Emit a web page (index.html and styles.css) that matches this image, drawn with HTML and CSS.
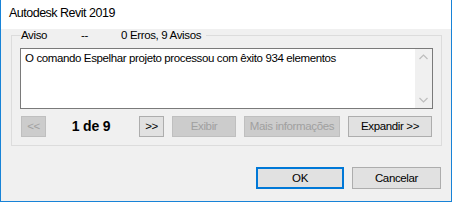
FILE: index.html
```html
<!DOCTYPE html>
<html>
<head>
<meta charset="utf-8">
<link rel="stylesheet" href="styles.css">
</head>
<body>
<div class="window">
  <div class="titlebar">Autodesk Revit 2019</div>
  <div class="content">
    <fieldset class="group">
      <legend class="legend"><span class="l-aviso">Aviso</span><span class="l-dash">--</span><span class="l-count">0 Erros, 9 Avisos</span></legend>
      <div class="msgbox">
        <div class="msgtext">O comando Espelhar projeto processou com êxito 934 elementos</div>
        <div class="scroll">
          <svg class="chev" width="9" height="6" viewBox="0 0 9 6"><path d="M0.5 5 L4.5 1 L8.5 5" fill="none" stroke="#bdbdbd" stroke-width="1.2"/></svg>
          <svg class="chev" width="9" height="6" viewBox="0 0 9 6"><path d="M0.5 1 L4.5 5 L8.5 1" fill="none" stroke="#bdbdbd" stroke-width="1.2"/></svg>
        </div>
      </div>
      <div class="navrow">
        <button class="btn dis b-prev">&lt;&lt;</button>
        <div class="counter">1 de 9</div>
        <button class="btn b-next">&gt;&gt;</button>
        <button class="btn dis b-exibir">Exibir</button>
        <button class="btn dis b-mais">Mais informações</button>
        <button class="btn b-exp">Expandir &gt;&gt;</button>
      </div>
    </fieldset>
    <div class="footer">
      <button class="btn b-ok">OK</button>
      <button class="btn b-cancel">Cancelar</button>
    </div>
  </div>
</div>
</body>
</html>
```
FILE: styles.css
```css
* { box-sizing: border-box; }
html, body { margin: 0; padding: 0; }
body {
  width: 452px;
  height: 202px;
  overflow: hidden;
  font-family: "Liberation Sans", Arial, sans-serif;
  font-size: 11.5px;
  color: #000;
}
.window {
  width: 452px;
  height: 202px;
  border: 1px solid #1883d7;
  border-top: none;
  background: #f0f0f0;
  display: flex;
  flex-direction: column;
}
.titlebar {
  height: 29px;
  background: #fff;
  padding-left: 8px;
  padding-top: 6px;
  font-size: 12.5px;
  line-height: 15px;
  letter-spacing: -0.5px;
}
.content {
  flex: 1;
  display: flex;
  flex-direction: column;
}
.group {
  margin: 0 0 0 10px;
  width: 431px;
  border: 1px solid #dcdcdc;
  padding: 6px 8px 8px 8px;
  min-width: 0;
}
.legend {
  padding: 0 5px 0 0;
  margin-left: 1px;
  line-height: 13px;
  height: 13px;
  font-size: 11.5px;
  letter-spacing: -0.35px;
  display: flex;
}
.l-aviso { width: 60px; }
.l-dash { width: 40px; }
.msgbox {
  height: 61px;
  border: 1px solid #7a7a7a;
  background: #fff;
  display: flex;
}
.msgtext {
  flex: 1;
  padding: 2px 0 0 4px;
  line-height: 14px;
  letter-spacing: -0.38px;
}
.scroll {
  width: 17px;
  background: #f0f0f0;
  display: flex;
  flex-direction: column;
  justify-content: space-between;
  align-items: center;
  padding: 5px 0 5px 0;
}
.chev { display: block; }
.navrow {
  display: flex;
  align-items: center;
  margin-top: 7px;
  height: 21px;
}
.btn {
  font-family: "Liberation Sans", Arial, sans-serif;
  font-size: 11.5px;
  letter-spacing: -0.35px;
  height: 21px;
  padding: 0;
  margin: 0;
  border: 1px solid #adadad;
  background: #e1e1e1;
  color: #000;
  line-height: 17px;
  white-space: nowrap;
}
.btn.dis {
  background: #cccccc;
  border-color: #bfbfbf;
  color: #a0a0a0;
}
.b-prev { width: 25px; margin-left: 1px; }
.counter {
  width: 93px;
  text-align: center;
  font-weight: bold;
  font-size: 14px;
  letter-spacing: -0.2px;
  line-height: 21px;
  padding-right: 3px;
}
.b-next { width: 25px; }
.b-exibir { width: 64px; margin-left: 8px; }
.b-mais { width: 96px; margin-left: 8px; }
.b-exp { width: 84px; margin-left: 8px; }
.footer {
  display: flex;
  justify-content: flex-end;
  margin-top: 21px;
  padding-right: 10px;
  gap: 8px;
}
.b-ok {
  width: 88px;
  height: 22px;
  border: 2px solid #0078d7;
}
.b-cancel {
  width: 89px;
  height: 22px;
}
```
